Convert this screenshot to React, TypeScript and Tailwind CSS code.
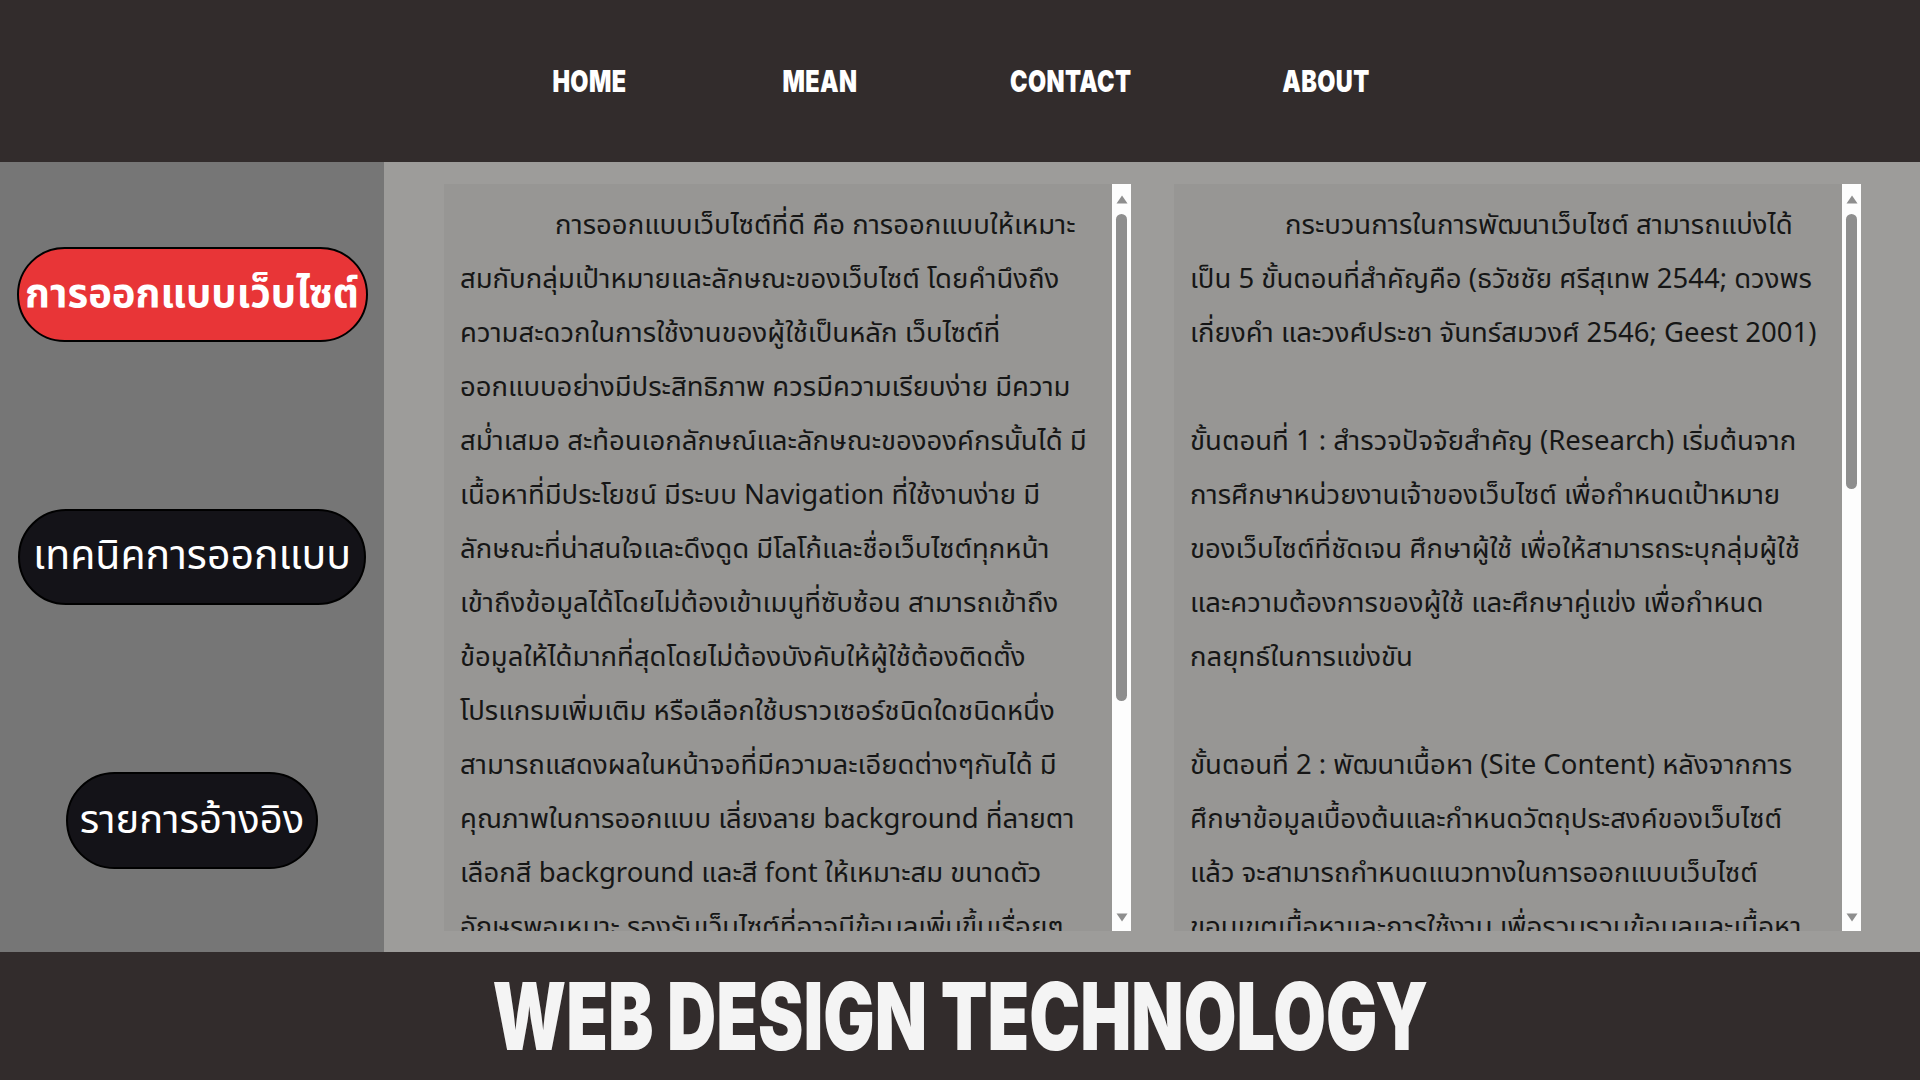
import React from "react"

const navItems = [
    { label: "HOME", w: "w-[76px]" },
    { label: "MEAN", w: "w-[75px]" },
    { label: "CONTACT", w: "w-[116px]" },
    { label: "ABOUT", w: "w-[85px]" },
]

const leftLines = [
    "การออกแบบเว็บไซต์ที่ดี คือ การออกแบบให้เหมาะ",
    "สมกับกลุ่มเป้าหมายและลักษณะของเว็บไซต์ โดยคำนึงถึง",
    "ความสะดวกในการใช้งานของผู้ใช้เป็นหลัก เว็บไซต์ที่",
    "ออกแบบอย่างมีประสิทธิภาพ ควรมีความเรียบง่าย มีความ",
    "สม่ำเสมอ สะท้อนเอกลักษณ์และลักษณะขององค์กรนั้นได้ มี",
    "เนื้อหาที่มีประโยชน์ มีระบบ Navigation ที่ใช้งานง่าย มี",
    "ลักษณะที่น่าสนใจและดึงดูด มีโลโก้และชื่อเว็บไซต์ทุกหน้า",
    "เข้าถึงข้อมูลได้โดยไม่ต้องเข้าเมนูที่ซับซ้อน สามารถเข้าถึง",
    "ข้อมูลให้ได้มากที่สุดโดยไม่ต้องบังคับให้ผู้ใช้ต้องติดตั้ง",
    "โปรแกรมเพิ่มเติม หรือเลือกใช้บราวเซอร์ชนิดใดชนิดหนึ่ง",
    "สามารถแสดงผลในหน้าจอที่มีความละเอียดต่างๆกันได้ มี",
    "คุณภาพในการออกแบบ เลี่ยงลาย background ที่ลายตา",
    "เลือกสี background และสี font ให้เหมาะสม ขนาดตัว",
    "อักษรพอเหมาะ รองรับเว็บไซต์ที่อาจมีข้อมูลเพิ่มขึ้นเรื่อยๆ",
]

const rightLines = [
    "กระบวนการในการพัฒนาเว็บไซต์ สามารถแบ่งได้",
    "เป็น 5 ขั้นตอนที่สำคัญคือ (ธวัชชัย ศรีสุเทพ 2544; ดวงพร",
    "เกี่ยงคำ และวงศ์ประชา จันทร์สมวงศ์ 2546; Geest 2001)",
    "",
    "ขั้นตอนที่ 1 : สำรวจปัจจัยสำคัญ (Research) เริ่มต้นจาก",
    "การศึกษาหน่วยงานเจ้าของเว็บไซต์ เพื่อกำหนดเป้าหมาย",
    "ของเว็บไซต์ที่ชัดเจน ศึกษาผู้ใช้ เพื่อให้สามารถระบุกลุ่มผู้ใช้",
    "และความต้องการของผู้ใช้ และศึกษาคู่แข่ง เพื่อกำหนด",
    "กลยุทธ์ในการแข่งขัน",
    "",
    "ขั้นตอนที่ 2 : พัฒนาเนื้อหา (Site Content) หลังจากการ",
    "ศึกษาข้อมูลเบื้องต้นและกำหนดวัตถุประสงค์ของเว็บไซต์",
    "แล้ว จะสามารถกำหนดแนวทางในการออกแบบเว็บไซต์",
    "ขอบเขตเนื้อหาและการใช้งาน เพื่อรวบรวมข้อมูลและเนื้อหา",
]

function Arrow({ down }: { down?: boolean }) {
    return (
        <svg width="12" height="9" viewBox="0 0 12 9" className={down ? "rotate-180" : ""}>
            <path d="M6 0.5 L11.5 8.5 H0.5 Z" fill="#8e8e8e" />
        </svg>
    )
}

function TextBox({ lines, thumb }: { lines: string[]; thumb: string }) {
    return (
        <div className="w-[687px] h-[747px] bg-[#979694] flex">
            <div className="flex-1 overflow-hidden pl-[16px] pt-[15px] text-[27.5px] leading-[54px] text-[#161616] font-['Leelawadee_UI','Noto_Sans_Thai','Noto_Sans',sans-serif]">
                {lines.map((line, i) => (
                    <div key={i} className={`whitespace-nowrap h-[54px] ${i === 0 ? "pl-[95px]" : ""}`}>
                        {line}
                    </div>
                ))}
            </div>
            <div className="w-[19px] h-full bg-[#fdfdfd] flex flex-col items-center pt-[11px] pb-[9px]">
                <Arrow />
                <div className={`w-[11px] ${thumb} mt-[10px] rounded-full bg-[#8e8e8e]`}></div>
                <div className="flex-1"></div>
                <Arrow down />
            </div>
        </div>
    )
}

export default function App() {
    return (
        <div className="w-[1920px] h-[1080px] flex flex-col overflow-hidden">
            <header className="h-[162px] bg-[#322c2c] flex items-center justify-center gap-[155px]">
                {navItems.map((item) => (
                    <a key={item.label} href="#" className={`${item.w} flex justify-center`}>
                        <span className="whitespace-nowrap text-[30px] font-black text-white scale-x-[0.78] font-['Inter',sans-serif] tracking-[0.5px]">
                            {item.label}
                        </span>
                    </a>
                ))}
            </header>

            <div className="h-[790px] flex">
                <aside className="w-[384px] bg-[#767676] flex flex-col items-center pt-[85px] gap-[167px] font-['Leelawadee_UI','Noto_Sans_Thai','Noto_Sans',sans-serif]">
                    <button className="w-[351px] h-[95px] rounded-full border-2 border-black bg-[#e83537] text-white text-[40px] font-bold whitespace-nowrap flex items-center justify-center">
                        การออกแบบเว็บไซต์
                    </button>
                    <button className="w-[348px] h-[96px] rounded-full border-2 border-black bg-[#141318] text-white text-[41px] whitespace-nowrap flex items-center justify-center">
                        เทคนิคการออกแบบ
                    </button>
                    <button className="w-[252px] h-[97px] rounded-full border-2 border-black bg-[#141318] text-white text-[40px] whitespace-nowrap flex items-center justify-center">
                        รายการอ้างอิง
                    </button>
                </aside>

                <main className="flex-1 bg-[#9d9c9a] flex pl-[60px] pt-[22px] gap-[43px]">
                    <TextBox lines={leftLines} thumb="h-[487px]" />
                    <TextBox lines={rightLines} thumb="h-[275px]" />
                </main>
            </div>

            <footer className="h-[128px] bg-[#322c2c] flex items-center justify-center">
                <h1 className="whitespace-nowrap text-[94px] leading-none font-black text-[#f4f4f4] scale-x-[0.725] font-['Inter',sans-serif]">
                    WEB DESIGN TECHNOLOGY
                </h1>
            </footer>
        </div>
    )
}
